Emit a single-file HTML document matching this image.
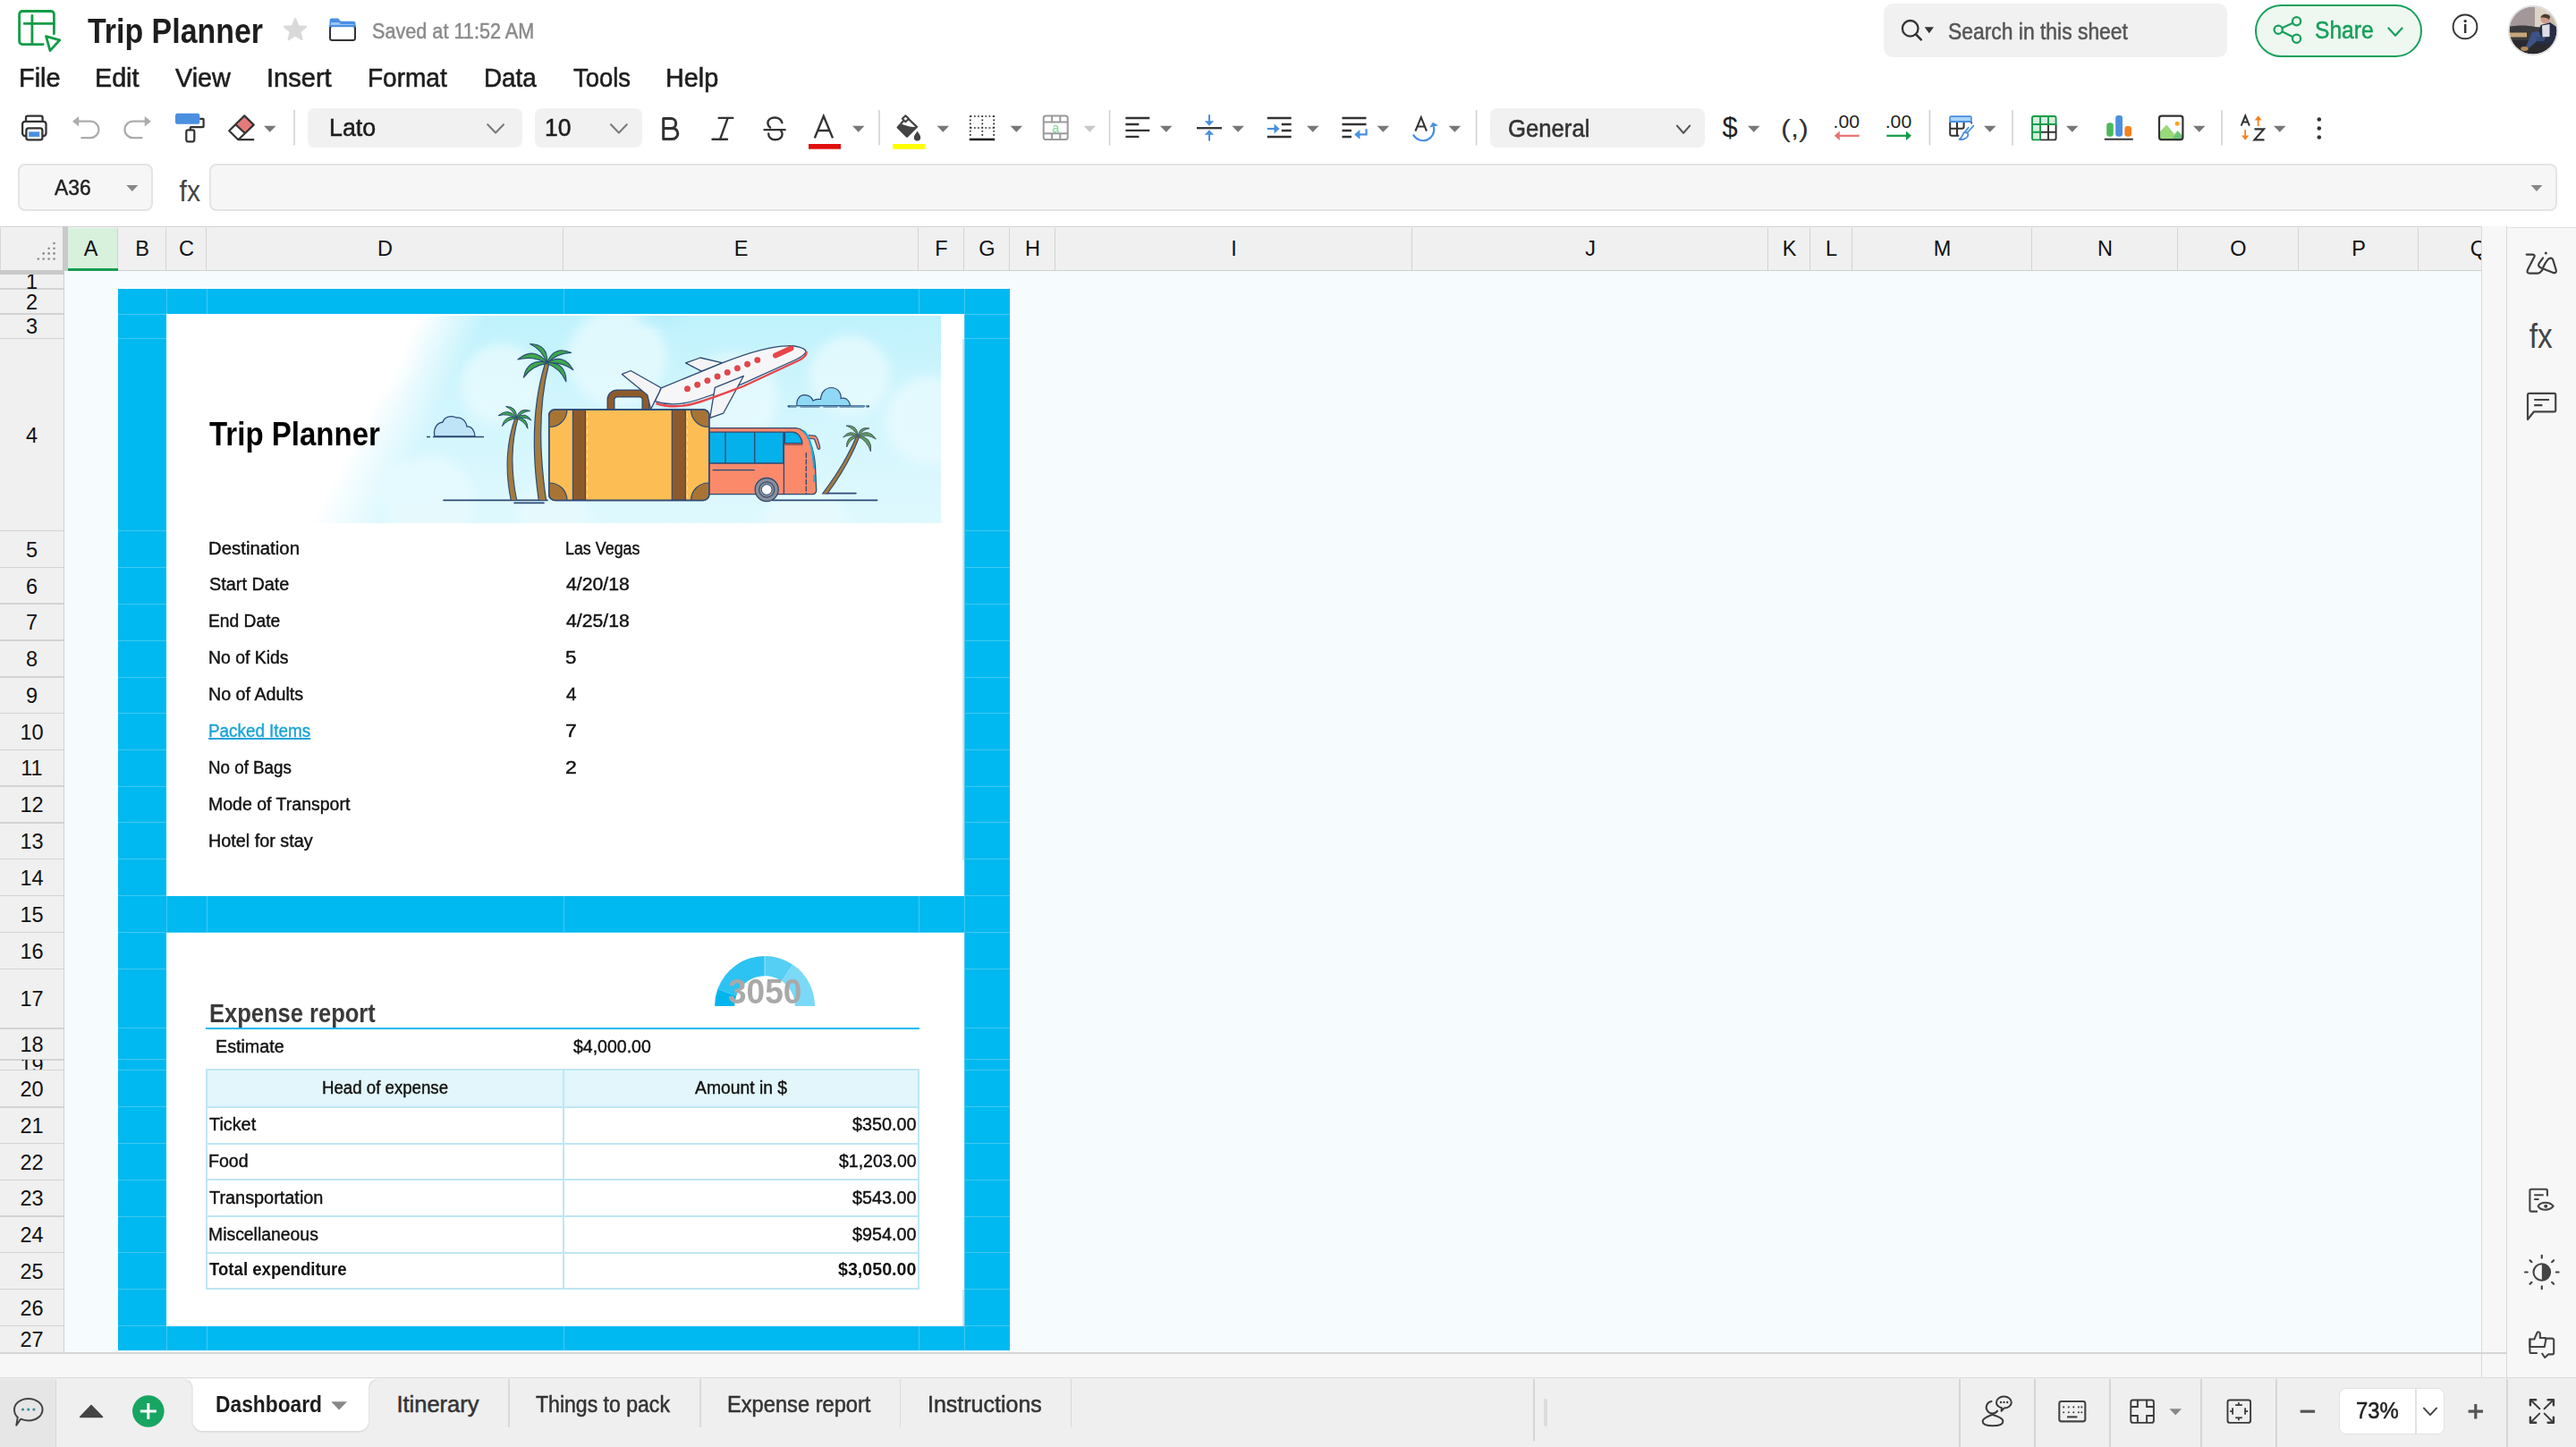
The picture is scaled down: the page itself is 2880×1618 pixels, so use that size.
<!DOCTYPE html>
<html><head><meta charset="utf-8"><title>Trip Planner</title>
<style>
html,body{margin:0;padding:0;}
body{width:2880px;height:1618px;overflow:hidden;position:relative;background:#fff;font-family:"Liberation Sans",sans-serif;}
.t{position:absolute;white-space:nowrap;transform-origin:0 0;z-index:10;}
.ct{position:absolute;z-index:10;text-align:center;font-size:23.5px;line-height:26px;color:#111;}
.rn{position:absolute;left:0;width:71px;text-align:center;font-size:23.5px;line-height:26px;color:#111;}
svg{position:absolute;left:0;top:0;overflow:visible}
</style></head><body>
<div style="position:absolute;left:2106px;top:4px;width:384px;height:60px;border-radius:10px;background:#f1f1f1"></div>
<div style="position:absolute;left:2521px;top:4.5px;width:187px;height:59px;box-sizing:border-box;border:2.3px solid #17a05b;border-radius:30px;background:#eef8f1"></div>
<div style="position:absolute;left:344px;top:121px;width:240px;height:43.5px;border-radius:8px;background:#f1f1f1"></div>
<div style="position:absolute;left:598px;top:121px;width:120px;height:43.5px;border-radius:8px;background:#f1f1f1"></div>
<div style="position:absolute;left:1666.3px;top:121px;width:239.4px;height:44px;border-radius:8px;background:#f1f1f1"></div>
<div style="position:absolute;left:20.4px;top:183px;width:151px;height:53.3px;box-sizing:border-box;border:2px solid #e4e4e4;border-radius:8px;background:#f6f6f6"></div>
<div style="position:absolute;left:234.2px;top:183px;width:2625px;height:53.3px;box-sizing:border-box;border:2px solid #e4e4e4;border-radius:8px;background:#f6f6f6"></div>
<div style="position:absolute;left:72px;top:303px;width:2702px;height:1209px;background:#f6fbfe"></div>
<div style="position:absolute;left:0;top:253px;width:2774px;height:50px;background:#f0f0f0;border-top:1.5px solid #d3d3d3;box-sizing:border-box;overflow:hidden"></div>
<div style="position:absolute;left:0;top:254.5px;width:2774px;height:48.5px;overflow:hidden"><div style="position:absolute;left:76px;top:0;width:56px;height:48.5px;background:#d8f1dc;border-right:1.5px solid #d3d3d3;box-sizing:border-box"></div><div style="position:absolute;left:132px;top:0;width:54px;height:48.5px;background:#f0f0f0;border-right:1.5px solid #d3d3d3;box-sizing:border-box"></div><div style="position:absolute;left:186px;top:0;width:45px;height:48.5px;background:#f0f0f0;border-right:1.5px solid #d3d3d3;box-sizing:border-box"></div><div style="position:absolute;left:231px;top:0;width:399px;height:48.5px;background:#f0f0f0;border-right:1.5px solid #d3d3d3;box-sizing:border-box"></div><div style="position:absolute;left:630px;top:0;width:397px;height:48.5px;background:#f0f0f0;border-right:1.5px solid #d3d3d3;box-sizing:border-box"></div><div style="position:absolute;left:1027px;top:0;width:51px;height:48.5px;background:#f0f0f0;border-right:1.5px solid #d3d3d3;box-sizing:border-box"></div><div style="position:absolute;left:1078px;top:0;width:51px;height:48.5px;background:#f0f0f0;border-right:1.5px solid #d3d3d3;box-sizing:border-box"></div><div style="position:absolute;left:1129px;top:0;width:51px;height:48.5px;background:#f0f0f0;border-right:1.5px solid #d3d3d3;box-sizing:border-box"></div><div style="position:absolute;left:1180px;top:0;width:399px;height:48.5px;background:#f0f0f0;border-right:1.5px solid #d3d3d3;box-sizing:border-box"></div><div style="position:absolute;left:1579px;top:0;width:398px;height:48.5px;background:#f0f0f0;border-right:1.5px solid #d3d3d3;box-sizing:border-box"></div><div style="position:absolute;left:1977px;top:0;width:47px;height:48.5px;background:#f0f0f0;border-right:1.5px solid #d3d3d3;box-sizing:border-box"></div><div style="position:absolute;left:2024px;top:0;width:47px;height:48.5px;background:#f0f0f0;border-right:1.5px solid #d3d3d3;box-sizing:border-box"></div><div style="position:absolute;left:2071px;top:0;width:201px;height:48.5px;background:#f0f0f0;border-right:1.5px solid #d3d3d3;box-sizing:border-box"></div><div style="position:absolute;left:2272px;top:0;width:163px;height:48.5px;background:#f0f0f0;border-right:1.5px solid #d3d3d3;box-sizing:border-box"></div><div style="position:absolute;left:2435px;top:0;width:135px;height:48.5px;background:#f0f0f0;border-right:1.5px solid #d3d3d3;box-sizing:border-box"></div><div style="position:absolute;left:2570px;top:0;width:134px;height:48.5px;background:#f0f0f0;border-right:1.5px solid #d3d3d3;box-sizing:border-box"></div><div style="position:absolute;left:2704px;top:0;width:134px;height:48.5px;background:#f0f0f0;border-right:1.5px solid #d3d3d3;box-sizing:border-box"></div></div>
<div style="position:absolute;left:0;top:301.5px;width:2774px;height:1.5px;background:#d0d0d0"></div>
<div style="position:absolute;left:76px;top:300px;width:56px;height:3px;background:#1a9c50"></div>
<div style="position:absolute;left:0;top:254.5px;width:70px;height:48px;background:#f0f0f0;border-left:1.5px solid #d8d8d8;box-sizing:border-box"></div>
<div style="position:absolute;left:70px;top:253px;width:6px;height:50px;background:#c9c9c9"></div>
<div style="position:absolute;left:0;top:302px;width:72px;height:4.5px;background:#c9c9c9"></div>
<div style="position:absolute;left:0;top:306.5px;width:72px;height:1205.5px;background:#f0f0f0;border-right:1.5px solid #d0d0d0;box-sizing:border-box"></div>
<div style="position:absolute;left:0;top:322.25px;width:71px;height:1.5px;background:#d3d3d3"></div>
<div style="position:absolute;left:0;top:350.25px;width:71px;height:1.5px;background:#d3d3d3"></div>
<div style="position:absolute;left:0;top:377.75px;width:71px;height:1.5px;background:#d3d3d3"></div>
<div style="position:absolute;left:0;top:592.95px;width:71px;height:1.5px;background:#d3d3d3"></div>
<div style="position:absolute;left:0;top:633.75px;width:71px;height:1.5px;background:#d3d3d3"></div>
<div style="position:absolute;left:0;top:674.45px;width:71px;height:1.5px;background:#d3d3d3"></div>
<div style="position:absolute;left:0;top:715.45px;width:71px;height:1.5px;background:#d3d3d3"></div>
<div style="position:absolute;left:0;top:756.25px;width:71px;height:1.5px;background:#d3d3d3"></div>
<div style="position:absolute;left:0;top:796.95px;width:71px;height:1.5px;background:#d3d3d3"></div>
<div style="position:absolute;left:0;top:837.65px;width:71px;height:1.5px;background:#d3d3d3"></div>
<div style="position:absolute;left:0;top:878.35px;width:71px;height:1.5px;background:#d3d3d3"></div>
<div style="position:absolute;left:0;top:919.05px;width:71px;height:1.5px;background:#d3d3d3"></div>
<div style="position:absolute;left:0;top:959.85px;width:71px;height:1.5px;background:#d3d3d3"></div>
<div style="position:absolute;left:0;top:1000.85px;width:71px;height:1.5px;background:#d3d3d3"></div>
<div style="position:absolute;left:0;top:1041.85px;width:71px;height:1.5px;background:#d3d3d3"></div>
<div style="position:absolute;left:0;top:1082.75px;width:71px;height:1.5px;background:#d3d3d3"></div>
<div style="position:absolute;left:0;top:1149.05px;width:71px;height:1.5px;background:#d3d3d3"></div>
<div style="position:absolute;left:0;top:1184.05px;width:71px;height:1.5px;background:#d3d3d3"></div>
<div style="position:absolute;left:0;top:1195.75px;width:71px;height:1.5px;background:#d3d3d3"></div>
<div style="position:absolute;left:0;top:1237.05px;width:71px;height:1.5px;background:#d3d3d3"></div>
<div style="position:absolute;left:0;top:1277.85px;width:71px;height:1.5px;background:#d3d3d3"></div>
<div style="position:absolute;left:0;top:1318.55px;width:71px;height:1.5px;background:#d3d3d3"></div>
<div style="position:absolute;left:0;top:1359.25px;width:71px;height:1.5px;background:#d3d3d3"></div>
<div style="position:absolute;left:0;top:1399.95px;width:71px;height:1.5px;background:#d3d3d3"></div>
<div style="position:absolute;left:0;top:1440.75px;width:71px;height:1.5px;background:#d3d3d3"></div>
<div style="position:absolute;left:0;top:1481.85px;width:71px;height:1.5px;background:#d3d3d3"></div>
<div style="position:absolute;left:132px;top:323px;width:997px;height:1187px;background:#00b9f0"></div>
<div style="position:absolute;left:185.5px;top:323px;width:1px;height:1187px;background:#3fc8f3"></div>
<div style="position:absolute;left:230.5px;top:323px;width:1px;height:1187px;background:#3fc8f3"></div>
<div style="position:absolute;left:629.5px;top:323px;width:1px;height:1187px;background:#3fc8f3"></div>
<div style="position:absolute;left:1026.5px;top:323px;width:1px;height:1187px;background:#3fc8f3"></div>
<div style="position:absolute;left:1077.5px;top:323px;width:1px;height:1187px;background:#3fc8f3"></div>
<div style="position:absolute;left:132px;top:350.5px;width:997px;height:1px;background:#3fc8f3"></div>
<div style="position:absolute;left:132px;top:378.0px;width:997px;height:1px;background:#3fc8f3"></div>
<div style="position:absolute;left:132px;top:593.2px;width:997px;height:1px;background:#3fc8f3"></div>
<div style="position:absolute;left:132px;top:634.0px;width:997px;height:1px;background:#3fc8f3"></div>
<div style="position:absolute;left:132px;top:674.7px;width:997px;height:1px;background:#3fc8f3"></div>
<div style="position:absolute;left:132px;top:715.7px;width:997px;height:1px;background:#3fc8f3"></div>
<div style="position:absolute;left:132px;top:756.5px;width:997px;height:1px;background:#3fc8f3"></div>
<div style="position:absolute;left:132px;top:797.2px;width:997px;height:1px;background:#3fc8f3"></div>
<div style="position:absolute;left:132px;top:837.9px;width:997px;height:1px;background:#3fc8f3"></div>
<div style="position:absolute;left:132px;top:878.6px;width:997px;height:1px;background:#3fc8f3"></div>
<div style="position:absolute;left:132px;top:919.3px;width:997px;height:1px;background:#3fc8f3"></div>
<div style="position:absolute;left:132px;top:960.1px;width:997px;height:1px;background:#3fc8f3"></div>
<div style="position:absolute;left:132px;top:1001.1px;width:997px;height:1px;background:#3fc8f3"></div>
<div style="position:absolute;left:132px;top:1042.1px;width:997px;height:1px;background:#3fc8f3"></div>
<div style="position:absolute;left:132px;top:1083.0px;width:997px;height:1px;background:#3fc8f3"></div>
<div style="position:absolute;left:132px;top:1149.3px;width:997px;height:1px;background:#3fc8f3"></div>
<div style="position:absolute;left:132px;top:1184.3px;width:997px;height:1px;background:#3fc8f3"></div>
<div style="position:absolute;left:132px;top:1196.0px;width:997px;height:1px;background:#3fc8f3"></div>
<div style="position:absolute;left:132px;top:1237.3px;width:997px;height:1px;background:#3fc8f3"></div>
<div style="position:absolute;left:132px;top:1278.1px;width:997px;height:1px;background:#3fc8f3"></div>
<div style="position:absolute;left:132px;top:1318.8px;width:997px;height:1px;background:#3fc8f3"></div>
<div style="position:absolute;left:132px;top:1359.5px;width:997px;height:1px;background:#3fc8f3"></div>
<div style="position:absolute;left:132px;top:1400.2px;width:997px;height:1px;background:#3fc8f3"></div>
<div style="position:absolute;left:132px;top:1441.0px;width:997px;height:1px;background:#3fc8f3"></div>
<div style="position:absolute;left:132px;top:1482.1px;width:997px;height:1px;background:#3fc8f3"></div>
<div style="position:absolute;left:186px;top:351px;width:892px;height:650.6px;background:#fff"></div>
<div style="position:absolute;left:186px;top:1042.6px;width:892px;height:440px;background:#fff"></div>
<div style="position:absolute;left:1076.2px;top:379px;width:1.5px;height:583px;background:#d9dfe2"></div>
<div style="position:absolute;left:1076.2px;top:1441.5px;width:1.5px;height:41px;background:#d9dfe2"></div>
<div style="position:absolute;left:230px;top:1148.7px;width:797.6px;height:2.2px;background:#10b6ee"></div>
<div style="position:absolute;left:230.5px;top:1196px;width:796.5px;height:41.5px;background:#e2f6fc"></div>
<div style="position:absolute;left:230px;top:1195px;width:798px;height:2px;background:#bfe6f5"></div>
<div style="position:absolute;left:230px;top:1236.6px;width:798px;height:2px;background:#bfe6f5"></div>
<div style="position:absolute;left:230px;top:1277.5px;width:798px;height:2px;background:#bfe6f5"></div>
<div style="position:absolute;left:230px;top:1318.3px;width:798px;height:2px;background:#bfe6f5"></div>
<div style="position:absolute;left:230px;top:1359px;width:798px;height:2px;background:#bfe6f5"></div>
<div style="position:absolute;left:230px;top:1399.8px;width:798px;height:2px;background:#bfe6f5"></div>
<div style="position:absolute;left:230px;top:1440.4px;width:798px;height:2px;background:#bfe6f5"></div>
<div style="position:absolute;left:230px;top:1195px;width:2px;height:247.4px;background:#bfe6f5"></div>
<div style="position:absolute;left:628.8px;top:1195px;width:2px;height:247.4px;background:#bfe6f5"></div>
<div style="position:absolute;left:1025.9px;top:1195px;width:2px;height:247.4px;background:#bfe6f5"></div>
<div style="position:absolute;left:2774px;top:253px;width:29px;height:1287px;background:#f7f7f7;border-left:1.5px solid #d9d9d9;border-right:1.5px solid #d9d9d9;box-sizing:border-box"></div>
<div style="position:absolute;left:2803px;top:253.5px;width:77px;height:1287px;background:#f7f7f7;border-top:1.5px solid #e2e2e2;box-sizing:border-box"></div>
<div style="position:absolute;left:0;top:1512px;width:2774px;height:28.5px;background:#f7f7f7;border-top:2px solid #d6d6d6;box-sizing:border-box"></div>
<div style="position:absolute;left:2774px;top:1512px;width:29px;height:2px;background:#d6d6d6"></div>
<div style="position:absolute;left:0;top:1540px;width:2880px;height:78px;background:#efefef;border-top:1.5px solid #dcdcdc;box-sizing:border-box"></div>
<div style="position:absolute;left:0;top:1541.5px;width:63px;height:76.5px;background:#e6e6e6;border-right:1.5px solid #d8d8d8;box-sizing:border-box"></div>
<div style="position:absolute;left:568.05px;top:1542px;width:1.5px;height:54px;background:#dadada"></div>
<div style="position:absolute;left:782.25px;top:1542px;width:1.5px;height:54px;background:#dadada"></div>
<div style="position:absolute;left:1005.95px;top:1542px;width:1.5px;height:54px;background:#dadada"></div>
<div style="position:absolute;left:1196.95px;top:1542px;width:1.5px;height:54px;background:#dadada"></div>
<div style="position:absolute;left:1714.3px;top:1542px;width:1.5px;height:69px;background:#d6d6d6"></div>
<div style="position:absolute;left:1726px;top:1564px;width:4px;height:31px;background:#dcdcdc;border-radius:2px"></div>
<div style="position:absolute;left:2190.25px;top:1541.5px;width:1.5px;height:76.5px;background:#d6d6d6"></div>
<div style="position:absolute;left:2274.25px;top:1541.5px;width:1.5px;height:76.5px;background:#d6d6d6"></div>
<div style="position:absolute;left:2358.25px;top:1541.5px;width:1.5px;height:76.5px;background:#d6d6d6"></div>
<div style="position:absolute;left:2460.25px;top:1541.5px;width:1.5px;height:76.5px;background:#d6d6d6"></div>
<div style="position:absolute;left:2544.25px;top:1541.5px;width:1.5px;height:76.5px;background:#d6d6d6"></div>
<div style="position:absolute;left:2802.25px;top:1541.5px;width:1.5px;height:76.5px;background:#d6d6d6"></div>
<div style="position:absolute;left:2615px;top:1552px;width:118px;height:52px;box-sizing:border-box;border:1.5px solid #e2e2e2;border-radius:8px;background:#fff"></div>
<div style="position:absolute;left:2700.3px;top:1553px;width:1.5px;height:50px;background:#e2e2e2"></div>
<div style="position:absolute;left:0;top:0;width:2774px;height:303px;overflow:hidden"><div class="ct" style="left:71px;width:61px;top:265px">A</div><div class="ct" style="left:132px;width:54px;top:265px">B</div><div class="ct" style="left:186px;width:45px;top:265px">C</div><div class="ct" style="left:231px;width:399px;top:265px">D</div><div class="ct" style="left:630px;width:397px;top:265px">E</div><div class="ct" style="left:1027px;width:51px;top:265px">F</div><div class="ct" style="left:1078px;width:51px;top:265px">G</div><div class="ct" style="left:1129px;width:51px;top:265px">H</div><div class="ct" style="left:1180px;width:399px;top:265px">I</div><div class="ct" style="left:1579px;width:398px;top:265px">J</div><div class="ct" style="left:1977px;width:47px;top:265px">K</div><div class="ct" style="left:2024px;width:47px;top:265px">L</div><div class="ct" style="left:2071px;width:201px;top:265px">M</div><div class="ct" style="left:2272px;width:163px;top:265px">N</div><div class="ct" style="left:2435px;width:135px;top:265px">O</div><div class="ct" style="left:2570px;width:134px;top:265px">P</div><div class="ct" style="left:2704px;width:134px;top:265px">Q</div></div>
<div style="position:absolute;left:0;top:306.5px;width:71px;height:16.5px;overflow:hidden"><div class="rn" style="top:-4.05px">1</div></div><div style="position:absolute;left:0;top:323px;width:71px;height:28px;overflow:hidden"><div class="rn" style="top:1.70px">2</div></div><div style="position:absolute;left:0;top:351px;width:71px;height:27.5px;overflow:hidden"><div class="rn" style="top:1.45px">3</div></div><div style="position:absolute;left:0;top:378.5px;width:71px;height:215.20000000000005px;overflow:hidden"><div class="rn" style="top:95.30px">4</div></div><div style="position:absolute;left:0;top:593.7px;width:71px;height:40.799999999999955px;overflow:hidden"><div class="rn" style="top:8.10px">5</div></div><div style="position:absolute;left:0;top:634.5px;width:71px;height:40.700000000000045px;overflow:hidden"><div class="rn" style="top:8.05px">6</div></div><div style="position:absolute;left:0;top:675.2px;width:71px;height:41.0px;overflow:hidden"><div class="rn" style="top:8.20px">7</div></div><div style="position:absolute;left:0;top:716.2px;width:71px;height:40.799999999999955px;overflow:hidden"><div class="rn" style="top:8.10px">8</div></div><div style="position:absolute;left:0;top:757px;width:71px;height:40.700000000000045px;overflow:hidden"><div class="rn" style="top:8.05px">9</div></div><div style="position:absolute;left:0;top:797.7px;width:71px;height:40.69999999999993px;overflow:hidden"><div class="rn" style="top:8.05px">10</div></div><div style="position:absolute;left:0;top:838.4px;width:71px;height:40.700000000000045px;overflow:hidden"><div class="rn" style="top:8.05px">11</div></div><div style="position:absolute;left:0;top:879.1px;width:71px;height:40.69999999999993px;overflow:hidden"><div class="rn" style="top:8.05px">12</div></div><div style="position:absolute;left:0;top:919.8px;width:71px;height:40.80000000000007px;overflow:hidden"><div class="rn" style="top:8.10px">13</div></div><div style="position:absolute;left:0;top:960.6px;width:71px;height:41.0px;overflow:hidden"><div class="rn" style="top:8.20px">14</div></div><div style="position:absolute;left:0;top:1001.6px;width:71px;height:40.999999999999886px;overflow:hidden"><div class="rn" style="top:8.20px">15</div></div><div style="position:absolute;left:0;top:1042.6px;width:71px;height:40.90000000000009px;overflow:hidden"><div class="rn" style="top:8.15px">16</div></div><div style="position:absolute;left:0;top:1083.5px;width:71px;height:66.29999999999995px;overflow:hidden"><div class="rn" style="top:20.85px">17</div></div><div style="position:absolute;left:0;top:1149.8px;width:71px;height:35.0px;overflow:hidden"><div class="rn" style="top:5.20px">18</div></div><div style="position:absolute;left:0;top:1184.8px;width:71px;height:11.700000000000045px;overflow:hidden"><div class="rn" style="top:-6.45px">19</div></div><div style="position:absolute;left:0;top:1196.5px;width:71px;height:41.299999999999955px;overflow:hidden"><div class="rn" style="top:8.35px">20</div></div><div style="position:absolute;left:0;top:1237.8px;width:71px;height:40.799999999999955px;overflow:hidden"><div class="rn" style="top:8.10px">21</div></div><div style="position:absolute;left:0;top:1278.6px;width:71px;height:40.700000000000045px;overflow:hidden"><div class="rn" style="top:8.05px">22</div></div><div style="position:absolute;left:0;top:1319.3px;width:71px;height:40.700000000000045px;overflow:hidden"><div class="rn" style="top:8.05px">23</div></div><div style="position:absolute;left:0;top:1360px;width:71px;height:40.700000000000045px;overflow:hidden"><div class="rn" style="top:8.05px">24</div></div><div style="position:absolute;left:0;top:1400.7px;width:71px;height:40.799999999999955px;overflow:hidden"><div class="rn" style="top:8.10px">25</div></div><div style="position:absolute;left:0;top:1441.5px;width:71px;height:41.09999999999991px;overflow:hidden"><div class="rn" style="top:8.25px">26</div></div><div style="position:absolute;left:0;top:1482.6px;width:71px;height:29.40000000000009px;overflow:hidden"><div class="rn" style="top:2.40px">27</div></div>
<svg width="2880" height="1618" viewBox="0 0 2880 1618" style="z-index:3"><defs><linearGradient id="bgG" x1="0" y1="1" x2="1" y2="0.2"><stop offset="0" stop-color="#ffffff"/><stop offset="0.22" stop-color="#ffffff"/><stop offset="0.42" stop-color="#e6f9fd"/><stop offset="0.6" stop-color="#d7f5fc"/><stop offset="1" stop-color="#d3f3fb"/></linearGradient><radialGradient id="fadeW" cx="0.05" cy="0.5" r="0.45"><stop offset="0" stop-color="#fff" stop-opacity="1"/><stop offset="0.6" stop-color="#fff" stop-opacity="1"/><stop offset="1" stop-color="#fff" stop-opacity="0"/></radialGradient><clipPath id="imgc"><rect x="186" y="353" width="866" height="232"/></clipPath></defs><g clip-path="url(#imgc)"><defs><linearGradient id="cy" x1="0" y1="0" x2="0" y2="1"><stop offset="0" stop-color="#bff2fc"/><stop offset="0.4" stop-color="#d0f5fd"/><stop offset="1" stop-color="#dff9fe"/></linearGradient><linearGradient id="wf" gradientUnits="userSpaceOnUse" x1="418" y1="450" x2="478" y2="482"><stop offset="0" stop-color="#fff" stop-opacity="1"/><stop offset="1" stop-color="#fff" stop-opacity="0"/></linearGradient><filter id="bl" x="-20%" y="-20%" width="140%" height="140%"><feGaussianBlur stdDeviation="6"/></filter></defs><rect x="186" y="353" width="866" height="232" fill="url(#cy)"/><g fill="#e9fbfe" opacity="0.75" filter="url(#bl)"><circle cx="480" cy="560" r="50"/><circle cx="560" cy="430" r="45"/><circle cx="690" cy="400" r="55"/><circle cx="820" cy="445" r="50"/><circle cx="950" cy="420" r="45"/><circle cx="1040" cy="470" r="50"/><circle cx="620" cy="580" r="40"/><circle cx="900" cy="585" r="45"/></g><g fill="#b8eefb" opacity="0.7" filter="url(#bl)"><ellipse cx="740" cy="355" rx="28" ry="10"/></g><rect x="186" y="353" width="866" height="232" fill="url(#wf)"/><defs><filter id="bl2" x="-50%" y="-50%" width="200%" height="200%"><feGaussianBlur stdDeviation="14"/></filter></defs><ellipse cx="330" cy="400" rx="120" ry="60" fill="#fff" filter="url(#bl2)"/><g stroke="#2c4a74" stroke-width="1.6" fill="none" stroke-linecap="round"><path d="M496 559.4 H612 M864 559.4 H980.6 M575 562.4 H608 M924 551.6 H957"/></g><path d="M486 488 C484 480 488 473 495 472 C497 466 504 464 510 467 C515 466 521 470 522 477 C527 476 531 482 531 488 Z" fill="#bfe4f7" stroke="#2c4a74" stroke-width="1.3"/><path d="M477 488.5 H481 M484 488.5 H541" stroke="#2c4a74" stroke-width="1.4"/><path d="M891 453.7 C890 447 894 441.5 899.5 441.7 C905 441.8 908 445.5 909 448 C911 446.5 914 446 917.5 446.5 C918 438.5 923 433.5 929.5 433.5 C936 433.5 940.5 438.5 940.2 445.5 C944 444 949.5 446.5 950.5 453.7 Z" fill="#8fd9f6" stroke="#2c4a74" stroke-width="1.2"/><path d="M881.5 454.3 H890 M895 454.3 H916 M921 454.3 H936 M939 454.3 H966 M969 454.3 H971" stroke="#2c4a74" stroke-width="2.2" stroke-linecap="round"/><path d="M883 454.3 H970" stroke="#7cc3e6" stroke-width="0.8"/><path d="M609.6 406 Q589.5 470 602.3 559.5 L610.6 559.5 Q597.5 470 613.6 407 Z" fill="#a47b3f" stroke="#2c4a74" stroke-width="1.2"/><path d="M611.6 405.4 Q613.0 385.1 592.6 384.5 Q606.3 391.1 611.6 406.4 Z" fill="#3ea84d" stroke="#2c4a74" stroke-width="1.1" stroke-linejoin="round"/><path d="M611.6 405.4 Q597.0 386.7 578.9 402.0 Q595.9 397.2 611.6 406.4 Z" fill="#3ea84d" stroke="#2c4a74" stroke-width="1.1" stroke-linejoin="round"/><path d="M611.6 405.4 Q589.8 400.1 585.4 422.1 Q595.2 408.5 611.6 406.4 Z" fill="#3ea84d" stroke="#2c4a74" stroke-width="1.1" stroke-linejoin="round"/><path d="M611.6 405.4 Q619.4 385.9 638.6 394.4 Q622.9 394.5 611.6 406.4 Z" fill="#3ea84d" stroke="#2c4a74" stroke-width="1.1" stroke-linejoin="round"/><path d="M611.6 405.4 Q630.6 394.4 640.9 413.8 Q627.9 403.7 611.6 406.4 Z" fill="#3ea84d" stroke="#2c4a74" stroke-width="1.1" stroke-linejoin="round"/><path d="M611.6 405.4 Q633.3 405.0 632.9 426.7 Q626.5 411.8 611.6 406.4 Z" fill="#3ea84d" stroke="#2c4a74" stroke-width="1.1" stroke-linejoin="round"/><path d="M576 467 Q561 510 571.3 559.5 L577.8 559.5 Q567.5 510 579 468 Z" fill="#a47b3f" stroke="#2c4a74" stroke-width="1.1"/><path d="M577.4 467.0 Q578.0 454.6 565.6 454.5 Q574.0 458.4 577.4 468.0 Z" fill="#3ea84d" stroke="#2c4a74" stroke-width="1.0" stroke-linejoin="round"/><path d="M577.4 467.0 Q568.5 455.3 557.2 464.7 Q567.8 461.8 577.4 468.0 Z" fill="#3ea84d" stroke="#2c4a74" stroke-width="1.0" stroke-linejoin="round"/><path d="M577.4 467.0 Q564.5 463.4 561.4 476.5 Q567.5 468.6 577.4 468.0 Z" fill="#3ea84d" stroke="#2c4a74" stroke-width="1.0" stroke-linejoin="round"/><path d="M577.4 467.0 Q581.0 455.3 592.6 459.4 Q583.5 460.2 577.4 468.0 Z" fill="#3ea84d" stroke="#2c4a74" stroke-width="1.0" stroke-linejoin="round"/><path d="M577.4 467.0 Q587.3 459.8 594.1 470.0 Q586.4 465.2 577.4 468.0 Z" fill="#3ea84d" stroke="#2c4a74" stroke-width="1.0" stroke-linejoin="round"/><path d="M577.4 467.0 Q590.0 466.5 590.0 479.2 Q586.1 470.6 577.4 468.0 Z" fill="#3ea84d" stroke="#2c4a74" stroke-width="1.0" stroke-linejoin="round"/><path d="M957.5 488 Q944 520 919.5 552 L925 552 Q948 521 960.5 489 Z" fill="#a47b3f" stroke="#2c4a74" stroke-width="1.1"/><path d="M959.2 487.0 Q958.3 474.6 946.0 476.0 Q954.8 478.9 959.2 488.0 Z" fill="#5e9f58" stroke="#4a5a6a" stroke-width="1.0" stroke-linejoin="round"/><path d="M959.2 487.0 Q949.9 479.4 942.7 489.0 Q950.6 484.7 959.2 488.0 Z" fill="#5e9f58" stroke="#4a5a6a" stroke-width="1.0" stroke-linejoin="round"/><path d="M959.2 487.0 Q946.1 486.9 946.5 500.0 Q950.2 491.0 959.2 488.0 Z" fill="#5e9f58" stroke="#4a5a6a" stroke-width="1.0" stroke-linejoin="round"/><path d="M959.2 487.0 Q961.4 476.3 972.0 479.0 Q964.0 480.4 959.2 488.0 Z" fill="#5e9f58" stroke="#4a5a6a" stroke-width="1.0" stroke-linejoin="round"/><path d="M959.2 487.0 Q971.4 478.5 979.4 491.0 Q970.1 485.0 959.2 488.0 Z" fill="#5e9f58" stroke="#4a5a6a" stroke-width="1.0" stroke-linejoin="round"/><path d="M959.2 487.0 Q975.7 488.6 973.5 505.0 Q970.0 493.1 959.2 488.0 Z" fill="#5e9f58" stroke="#4a5a6a" stroke-width="1.0" stroke-linejoin="round"/><path d="M683 458 V447 a7 7 0 0 1 7 -7 H715 a7 7 0 0 1 7 7 V458" fill="none" stroke="#2c4a74" stroke-width="9"/><path d="M683 458 V447 a7 7 0 0 1 7 -7 H715 a7 7 0 0 1 7 7 V458" fill="none" stroke="#8f5a2b" stroke-width="6.4"/><g stroke="#2c4a74" stroke-width="1.3" stroke-linejoin="round"><path d="M766.6 405.9 L783 400 L808.1 405.9 L784.3 415.2 Z" fill="#f4f4f6"/><path d="M695.4 418.4 L705.2 414.5 L739.2 433.8 L737 439 L727.5 457.6 L723.8 441.7 Z" fill="#f4f4f6"/><path d="M739.2 433.8 L808.6 405.4 C840 393 862 387 880.3 386.8 C890 386.5 899 388.5 901 392.5 C901 395 898 398 890 402 L829 429.6 C810 437 796.5 441.7 780 447 C765 452 748 454 732.2 448.7 L737 439 Z" fill="#f6f6f8"/><path d="M799.3 433.4 L831.4 420.3 L808.6 462.2 L793.7 467.4 Z" fill="#f4f4f6"/></g><path d="M733.5 451 C748 456 765 455 782 449.5 C800 444 815 438 832 431.5 L893 403 C899 400 902 396 901.5 393" fill="none" stroke="#e8454a" stroke-width="2.4"/><path d="M867 397.5 L884.5 389.6" stroke="#e8454a" stroke-width="6" stroke-linecap="round"/><circle cx="768.5" cy="434.8" r="3.2" fill="#e8454a" stroke="#c0353a" stroke-width="0.5"/><circle cx="779.7" cy="430.2" r="3.2" fill="#e8454a" stroke="#c0353a" stroke-width="0.5"/><circle cx="790.9" cy="425.6" r="3.2" fill="#e8454a" stroke="#c0353a" stroke-width="0.5"/><circle cx="802.1" cy="421.0" r="3.2" fill="#e8454a" stroke="#c0353a" stroke-width="0.5"/><circle cx="813.2" cy="416.4" r="3.2" fill="#e8454a" stroke="#c0353a" stroke-width="0.5"/><circle cx="824.4" cy="411.8" r="3.2" fill="#e8454a" stroke="#c0353a" stroke-width="0.5"/><circle cx="835.6" cy="407.2" r="3.2" fill="#e8454a" stroke="#c0353a" stroke-width="0.5"/><circle cx="846.8" cy="402.6" r="3.2" fill="#e8454a" stroke="#c0353a" stroke-width="0.5"/><g stroke="#2c4a74" stroke-width="1.3" stroke-linejoin="round"><path d="M790 478.6 H889.9 C902 478.6 910.5 500 911.6 523.6 L912.7 548 C912.7 551 911 552.7 908 552.7 H790 Z" fill="#fb8a6b"/><path d="M791 483.2 H875.9 V518 H791 Z" fill="#05b1ea"/><path d="M877.4 483.2 H886 C892 483.2 896 489 897.1 495.7 H877.4 Z" fill="#05b1ea"/><path d="M811 483.2 V518 M843.7 483.2 V518 M876.4 483.2 V552.7" fill="none"/><path d="M876.4 497.2 H897.5" fill="none" stroke="#8a4a4a"/><path d="M901.3 506 V552" fill="none" stroke-dasharray="6 1.5"/><path d="M796.6 525.7 H843.7" fill="none"/></g><path d="M904 486.5 L911.6 487.4 C913.5 488 915.5 494 916.8 500.5 C917 502.5 915 503 914.2 501.5 L910.5 491 L903.5 490" fill="#fb8a6b" stroke="#2c4a74" stroke-width="1.1"/><path d="M897.5 481.4 C905.5 486 909 503 910 524" fill="none" stroke="#05b1ea" stroke-width="2"/><path d="M910 531 V539" stroke="#05b1ea" stroke-width="1.6"/><circle cx="857.2" cy="547.5" r="13" fill="#8b9099" stroke="#2c4a74" stroke-width="1.3"/><circle cx="857.2" cy="547.5" r="8.6" fill="none" stroke="#2c4a74" stroke-width="1.1"/><circle cx="857.2" cy="547.5" r="5.8" fill="#fff" stroke="#2c4a74" stroke-width="1"/><rect x="613.8" y="458" width="179" height="101.4" rx="6.5" fill="#fdbd55" stroke="#2c4a74" stroke-width="1.5"/><path d="M614.5 477.5 A19.5 19.5 0 0 0 634 458.5 H620 a6 6 0 0 0 -5.5 6 Z" fill="#a87434"/><path d="M792 477.5 A19.5 19.5 0 0 1 772.5 458.5 H786 a6 6 0 0 1 6 6 Z" fill="#a87434"/><path d="M614.5 540 A19.5 19.5 0 0 1 634 559 H620 a6 6 0 0 1 -5.5 -6 Z" fill="#a87434"/><path d="M792 540 A19.5 19.5 0 0 0 772.5 559 H786 a6 6 0 0 0 6 -6 Z" fill="#a87434"/><path d="M614.5 477.5 A19.5 19.5 0 0 0 634 458.5 M792 477.5 A19.5 19.5 0 0 1 772.5 458.5 M614.5 540 A19.5 19.5 0 0 1 634 559 M792 540 A19.5 19.5 0 0 0 772.5 559" fill="none" stroke="#2c4a74" stroke-width="1.2"/><rect x="640.5" y="458.5" width="14" height="100.6" fill="#8f5a2b" stroke="#2c4a74" stroke-width="1.2"/><rect x="751.3" y="458.5" width="15" height="100.6" fill="#8f5a2b" stroke="#2c4a74" stroke-width="1.2"/><path d="M656.5 462 V556 M768.5 462 V556" stroke="#fde3a8" stroke-width="1" stroke-dasharray="5 4"/><rect x="613.8" y="458" width="179" height="101.4" rx="6.5" fill="none" stroke="#2c4a74" stroke-width="1.5"/></g><path d="M799.00 1125.00 A56 56 0 0 1 802.38 1105.85 L823.24 1113.44 A33.8 33.8 0 0 0 821.20 1125.00 Z" fill="#00b5ee"/><path d="M802.38 1105.85 A56 56 0 0 1 855.00 1069.00 L855.00 1091.20 A33.8 33.8 0 0 0 823.24 1113.44 Z" fill="#2cc3f2"/><path d="M855.00 1069.00 A56 56 0 0 1 886.31 1078.57 L873.90 1096.98 A33.8 33.8 0 0 0 855.00 1091.20 Z" fill="#55cff4"/><path d="M886.31 1078.57 A56 56 0 0 1 911.00 1125.00 L888.80 1125.00 A33.8 33.8 0 0 0 873.90 1096.98 Z" fill="#7ad9f7"/><path d="M855 1069 V1091.2" stroke="#fff" stroke-width="0.8" opacity="0.6"/></svg>
<svg width="2880" height="1618" viewBox="0 0 2880 1618" style="z-index:5"><g fill="none" stroke="#129c48" stroke-width="2.8" stroke-linecap="round" stroke-linejoin="round"><path d="M60.4 37.8 V16 a3.5 3.5 0 0 0 -3.5 -3.5 H25.1 a3.5 3.5 0 0 0 -3.5 3.5 V46.1 a3.5 3.5 0 0 0 3.5 3.5 H48.2"/><path d="M35.9 17.4 V49.6 M27.2 26.4 H60.4"/><path d="M51.5 40.7 L66.8 44.8 L56 56.6 Z"/></g><polygon points="330.10,21.20 333.39,29.27 342.08,29.91 335.43,35.53 337.51,43.99 330.10,39.40 322.69,43.99 324.77,35.53 318.12,29.91 326.81,29.27" fill="#d9d9d9" stroke="#d9d9d9" stroke-width="2.2" stroke-linejoin="round"/><path d="M368.5 28 V23 a2.5 2.5 0 0 1 2.5 -2.5 H378 l3 3.2 H395 a2.5 2.5 0 0 1 2.5 2.5 V30 H368.5 Z" fill="#4a90e2"/><path d="M370 25 H379 l2 2 H395.5 V28.5 H370 Z" fill="#9cc4f2"/><rect x="369" y="29" width="28" height="16" rx="2.5" fill="#fff" stroke="#333" stroke-width="2"/><rect x="368" y="28" width="30" height="2.2" fill="#4a90e2"/><circle cx="2135.7" cy="31.8" r="8.8" fill="none" stroke="#333" stroke-width="2.3"/><path d="M2142 38.3 L2147.8 44.4" stroke="#333" stroke-width="2.6" stroke-linecap="round"/><path d="M2151.7 30.3 h10.3 l-5.15 7 z" fill="#333"/><g fill="none" stroke="#17a05b" stroke-width="2.3"><circle cx="2567.6" cy="23.8" r="4.6"/><circle cx="2547.2" cy="33.2" r="4.6"/><circle cx="2567.6" cy="43.2" r="4.6"/><path d="M2551.4 31.2 L2563.4 25.8 M2551.4 35.2 L2563.4 41.2"/></g><path d="M2670.4 31.5 L2678.0 39.8 L2685.6 31.5" fill="none" stroke="#17a05b" stroke-width="2.2" stroke-linecap="round" stroke-linejoin="round"/><circle cx="2756" cy="29.9" r="13.4" fill="none" stroke="#333" stroke-width="1.9"/><circle cx="2756.2" cy="23.6" r="1.7" fill="#333"/><rect x="2755" y="27" width="2.4" height="10" fill="#333"/><defs><clipPath id="av"><circle cx="2832" cy="34" r="26.6"/></clipPath><filter id="avb"><feGaussianBlur stdDeviation="0.6"/></filter></defs><g clip-path="url(#av)"><g filter="url(#avb)"><rect x="2803" y="5" width="60" height="58" fill="#a3979a"/><rect x="2834" y="5" width="30" height="26" fill="#ddd3c6"/><rect x="2850" y="5" width="14" height="26" fill="#c9b9a6"/><path d="M2804 30 C2815 28 2825 28 2834 30 L2864 32 V64 H2803 Z" fill="#3b3b3e"/><rect x="2806" y="36.5" width="19" height="5" fill="#c7a77a"/><path d="M2804 45 H2864 V64 H2803 Z" fill="#2b2b2d"/><path d="M2840.5 28 L2851 25 L2858 30 L2858 50 L2836 49 L2838 36 Z" fill="#262e45"/><path d="M2842 28.5 L2850.5 27 L2850.5 41 L2842.5 41.5 Z" fill="#dedde8"/><path d="M2831 36 L2838.5 35 L2842 44 L2836 46 L2828 53.5 L2824 52 Z" fill="#3c5285"/><path d="M2836 41.5 L2846 42 L2844 46 L2836 46 Z" fill="#34497a"/><ellipse cx="2822.5" cy="54.5" rx="4.2" ry="2.4" fill="#b58a58"/><circle cx="2845.6" cy="21.5" r="5" fill="#cf9a8a"/><path d="M2840.5 20 C2840.5 15 2849 14 2851 18.5 L2850 22 C2847 19.5 2843 19 2840.5 20 Z" fill="#4a3a30"/></g></g><circle cx="2832" cy="34" r="27.2" fill="none" stroke="#dcdcdc" stroke-width="1.6"/><g fill="none" stroke="#333333" stroke-width="2.3" stroke-linejoin="round"><path d="M29 135.8 V131.6 a2 2 0 0 1 2 -2 H45.6 a2 2 0 0 1 2 2 V135.8"/><rect x="25.1" y="135.8" width="26.4" height="16.2" rx="3"/><rect x="29.4" y="143.3" width="18" height="13" rx="2.4" fill="#fff"/></g><rect x="32.2" y="147.3" width="12" height="5.6" fill="#4a8fe0"/><g fill="none" stroke="#acacac" stroke-width="2.3"><path d="M87 135.7 H101.2 a9.2 9.2 0 0 1 0 18.4 H90.4"/><path d="M162.8 135.7 H148.6 a9.2 9.2 0 0 0 0 18.4 H159.4"/></g><path d="M81 135.7 L88.2 130 V141.4 Z M168.9 135.7 L161.7 130 V141.4 Z" fill="#acacac"/><rect x="196" y="126.8" width="27.3" height="12" rx="2.6" fill="#4a8fe0"/><path d="M223.3 132.8 H226.8 a0.8 0.8 0 0 1 0.8 0.8 V141.3 a0.8 0.8 0 0 1 -0.8 0.8 H213.6 a0.8 0.8 0 0 0 -0.8 0.8 V145.5" fill="none" stroke="#333333" stroke-width="2.2"/><rect x="208.3" y="145.3" width="9" height="13" rx="2" fill="none" stroke="#333333" stroke-width="2.2"/><path d="M264.3 140.1 L273.3 130 L283.5 139.5 L273.3 148.4 Z" fill="#e57a7a"/><path d="M273.3 129.4 L283.7 139.6 L266.4 156.2 L256.2 146.3 Z M264 139.8 L273.6 148.8 M266.4 156.2 H284.2" fill="none" stroke="#333333" stroke-width="2.2" stroke-linejoin="round"/><path d="M295 140.7 h13.5 l-6.75 7.1 z" fill="#777777"/><rect x="328.25" y="123" width="1.5" height="39.5" fill="#cfcfcf"/><path d="M545.2 139.2 L554.1 148.39999999999998 L563.0 139.2" fill="none" stroke="#7a7a7a" stroke-width="2.1" stroke-linecap="round" stroke-linejoin="round"/><path d="M683 139.2 L691.9 148.39999999999998 L700.8 139.2" fill="none" stroke="#7a7a7a" stroke-width="2.1" stroke-linecap="round" stroke-linejoin="round"/><g fill="none" stroke="#333333" stroke-width="3" stroke-linejoin="round"><path d="M741.7 132.6 H750.3 a5.4 5.4 0 0 1 0 10.8 H741.7 Z M741.7 143.4 H751.8 a6 6 0 0 1 0 12 H741.7 Z"/></g><g fill="none" stroke="#333333" stroke-width="2.4" stroke-linecap="round"><path d="M803.7 131.9 H819.3 M796.5 155.8 H813 M813.7 131.9 L805 155.8"/><path d="M854.5 145.1 H877.7"/><path d="M874.4 137.2 C873.2 133.3 869.9 131.5 866.3 131.5 C861.6 131.5 858.4 134.1 858.4 137.6 C858.4 139.8 859.4 141.3 861.1 142.5"/><path d="M859.2 149.4 C859.2 153.5 862.4 156.3 866.6 156.3 C871.3 156.3 874.6 153.6 874.6 150 C874.6 148.7 874.2 147.5 873.3 146.6"/><path d="M910.8 154.4 L920.8 129.9 L931 154.4 M914.4 146 H927.3" stroke-linecap="butt"/></g><rect x="904" y="161" width="36" height="5.7" fill="#e00f0f"/><path d="M953 140.7 h13.5 l-6.75 7.1 z" fill="#777777"/><rect x="982.25" y="123" width="1.5" height="39.5" fill="#cfcfcf"/><path d="M1013.6 131 L1025 141.8 L1014 152.6 L1003.7 142.4 Z" fill="none" stroke="#444" stroke-width="2.3" stroke-linejoin="round"/><path d="M1004.5 142.3 L1008.6 139.6 C1013 141 1017 143.2 1022.6 142.6 L1024.4 141.8 L1014 152 Z" fill="#444" stroke="#444" stroke-width="1.2" stroke-linejoin="round"/><path d="M1012.4 129.3 L1016 132.8 L1012.4 136.3 L1008.8 132.8 Z" fill="#fff" stroke="#444" stroke-width="2.1" stroke-linejoin="round"/><path d="M1025.6 146.6 C1024 149.5 1021.8 151.6 1021.8 153.7 a3.7 3.7 0 0 0 7.4 0 C1029.2 151.6 1027.2 149.5 1025.6 146.6 Z" fill="#444"/><rect x="998" y="161" width="36" height="5.7" fill="#ffff00"/><path d="M1047.6 140.7 h13.5 l-6.75 7.1 z" fill="#777777"/><g fill="none" stroke="#222" stroke-width="1.7" stroke-dasharray="1.7 2.45"><path d="M1084.8 129.3 V154 M1098.3 129.3 V154 M1111.2 129.3 V154 M1084.8 130 H1112 M1084.8 143 H1112"/></g><rect x="1083.8" y="154.6" width="28.4" height="2.6" fill="#222"/><path d="M1129.6 140.7 h13.5 l-6.75 7.1 z" fill="#777777"/><g fill="none" stroke="#9a9a9a" stroke-width="2"><rect x="1166.7" y="129.6" width="27" height="26.4" rx="2.5"/><path d="M1166.7 136.6 H1193.7 M1166.7 149.2 H1193.7 M1176.1 129.6 V136.6 M1185.3 129.6 V136.6 M1176.1 149.2 V156 M1185.3 149.2 V156"/></g><text x="1180.2" y="147.6" font-size="14" text-anchor="middle" fill="#7fd39a" font-family="Liberation Sans">a</text><path d="M1211.6 140.7 h13.5 l-6.75 7.1 z" fill="#c9c9c9"/><rect x="1239.85" y="123" width="1.5" height="39.5" fill="#cfcfcf"/><g stroke="#333333" stroke-width="2.3"><path d="M1258.4 132 H1285.3 M1258.4 139 H1273.4 M1258.4 145.9 H1285.3 M1258.4 152.9 H1273.4"/></g><path d="M1297 140.7 h13.5 l-6.75 7.1 z" fill="#777777"/><path d="M1338 143.2 H1366" stroke="#333333" stroke-width="2.3"/><path d="M1352 128.2 V137 M1352 157.6 V149" stroke="#4a8fe0" stroke-width="2"/><path d="M1346.8 135.3 H1357.2 L1352 140.8 Z M1346.8 150.8 H1357.2 L1352 145.3 Z" fill="#4a8fe0"/><path d="M1377.4 140.7 h13.5 l-6.75 7.1 z" fill="#777777"/><g stroke="#333333" stroke-width="2.3"><path d="M1416.8 132 H1443.7 M1432.8 139 H1443.7 M1432.8 146 H1443.7 M1416.8 153 H1443.7"/></g><path d="M1416.8 144 H1426" stroke="#4a8fe0" stroke-width="2.2"/><path d="M1424.5 138.6 L1430.6 144 L1424.5 149.4 Z" fill="#4a8fe0"/><path d="M1461 140.7 h13.5 l-6.75 7.1 z" fill="#777777"/><g stroke="#333333" stroke-width="2.3"><path d="M1500.5 132 H1527.5 M1500.5 139 H1527.5 M1500.5 146 H1511 M1500.5 153 H1511"/></g><path d="M1527.6 144.3 V150.4 H1519" fill="none" stroke="#4a8fe0" stroke-width="2.2"/><path d="M1520.4 145 L1514.2 150.4 L1520.4 155.8 Z" fill="#4a8fe0"/><path d="M1539.6 140.7 h13.5 l-6.75 7.1 z" fill="#777777"/><path d="M1582.4 146.6 L1588.8 131.2 L1595 146.6 M1584.6 141.5 H1593" fill="none" stroke="#333333" stroke-width="2.1"/><path d="M1580 150.5 C1583 156.5 1590 158.5 1595.6 156.4 C1601 154.3 1604.3 148.5 1603 141.5" fill="none" stroke="#4a8fe0" stroke-width="2.2"/><path d="M1598.4 142.6 L1601.8 136.7 L1608.2 140.2 Z" fill="#4a8fe0"/><path d="M1619.7 140.7 h13.5 l-6.75 7.1 z" fill="#777777"/><rect x="1649.85" y="123" width="1.5" height="39.5" fill="#cfcfcf"/><path d="M1875 140.6 L1882.1 148.7 L1889.2 140.6" fill="none" stroke="#555" stroke-width="2.1" stroke-linecap="round" stroke-linejoin="round"/><text x="1925.5" y="153.3" font-size="31" fill="#222" font-family="Liberation Sans">$</text><path d="M1954 140.7 h13.5 l-6.75 7.1 z" fill="#777777"/><text x="1991" y="153" font-size="27" fill="#333" font-family="Liberation Sans" textLength="31" lengthAdjust="spacingAndGlyphs">(,)</text><text x="2049.5" y="143" font-size="21" fill="#222" font-family="Liberation Sans" textLength="29.5" lengthAdjust="spacingAndGlyphs">.00</text><path d="M2053.5 151.8 H2078.7" stroke="#e57373" stroke-width="2.2"/><path d="M2050.8 151.8 L2056.8 146.6 V157 Z" fill="#e57373"/><text x="2107.7" y="143" font-size="21" fill="#222" font-family="Liberation Sans" textLength="29.5" lengthAdjust="spacingAndGlyphs">.00</text><path d="M2109.3 151.8 H2134" stroke="#129c48" stroke-width="2.2"/><path d="M2137 151.8 L2131 146.6 V157 Z" fill="#129c48"/><rect x="2156.65" y="123" width="1.5" height="39.5" fill="#cfcfcf"/><path d="M2179.2 137 V131.5 a2.2 2.2 0 0 1 2.2 -2.2 H2202.6 a2.2 2.2 0 0 1 2.2 2.2 V137 Z" fill="#4a8fe0"/><rect x="2180.9" y="131" width="22.3" height="4" fill="#a8d4f5"/><path d="M2180.2 137 V149.7 a2 2 0 0 0 2 2 H2190.2 M2188 137 V151.7 M2180.2 143.8 H2193.6 a2 2 0 0 0 2 -2 V137" fill="none" stroke="#333333" stroke-width="2"/><rect x="2203.3" y="136.7" width="1.7" height="1.7" fill="#333333"/><path d="M2206.4 140.6 L2199.8 148 M2200.8 142.6 L2197 147.2 M2195.6 148.4 C2194 151 2193.5 154 2190.6 155.8 C2194.5 156.5 2198.5 155 2199.8 152.6 C2200.8 150.8 2200.2 149 2199 148.2 Z" fill="none" stroke="#4a8fe0" stroke-width="1.8" stroke-linecap="round" stroke-linejoin="round"/><path d="M2218 140.7 h13.5 l-6.75 7.1 z" fill="#777777"/><rect x="2249.25" y="123" width="1.5" height="39.5" fill="#cfcfcf"/><rect x="2272" y="130" width="26.6" height="26.4" fill="#d6efdd"/><rect x="2281" y="139" width="17.6" height="17.4" fill="#fff"/><path d="M2281 139 H2298.6 M2290 139 V156.4 M2281 147.8 H2298.6 M2298.6 139 V154.4 a2 2 0 0 1 -2 2 H2281" fill="none" stroke="#333333" stroke-width="1.9"/><path d="M2281 156.4 H2274 a2 2 0 0 1 -2 -2 V132 a2 2 0 0 1 2 -2 H2296.6 a2 2 0 0 1 2 2 V139 H2272 M2272 147.8 H2281 M2281 130 V156.4 M2290 130 V139" fill="none" stroke="#129c48" stroke-width="1.9"/><path d="M2310 140.7 h13.5 l-6.75 7.1 z" fill="#777777"/><rect x="2355.2" y="137.2" width="7.6" height="15.5" rx="3.2" fill="#4cb85c"/><rect x="2365.2" y="129" width="7.8" height="23.7" rx="3.2" fill="#4a8fe0"/><rect x="2375.4" y="141" width="7.6" height="11.7" rx="3" fill="#f5821f"/><rect x="2352.8" y="154.7" width="32" height="2" fill="#333333"/><path d="M2415 155.5 V147 L2422.3 139.5 L2431 150 L2434.5 146 L2439.8 151.5 V155.5 Z" fill="#98d97a"/><path d="M2428.5 155.5 L2434.5 146.5 L2439.8 152 V155.5 Z" fill="#6cc77a"/><circle cx="2434.2" cy="138.2" r="2.5" fill="#f5a623"/><rect x="2414" y="129.6" width="26.4" height="26.6" rx="2.6" fill="none" stroke="#333333" stroke-width="2.2"/><path d="M2452 140.7 h13.5 l-6.75 7.1 z" fill="#777777"/><rect x="2483.25" y="123" width="1.5" height="39.5" fill="#cfcfcf"/><path d="M2505.7 140.6 L2510.3 129.4 L2514.9 140.6 M2507.3 136.6 H2513.3" fill="none" stroke="#333333" stroke-width="2"/><path d="M2520.5 144.4 H2531 L2520.5 156.4 H2531.5" fill="none" stroke="#333333" stroke-width="2.2"/><path d="M2524.7 141 V133" stroke="#f5821f" stroke-width="1.8"/><path d="M2520.7 134.5 L2524.7 129.2 L2528.7 134.5 Z" fill="#f5821f"/><path d="M2510.2 145 V152.6" stroke="#f5821f" stroke-width="1.8"/><path d="M2506.2 151.5 L2510.2 156.8 L2514.2 151.5 Z" fill="#f5821f"/><path d="M2542 140.7 h13.5 l-6.75 7.1 z" fill="#777777"/><circle cx="2592.8" cy="133.5" r="2.3" fill="#333333"/><circle cx="2592.8" cy="143.5" r="2.3" fill="#333333"/><circle cx="2592.8" cy="153.5" r="2.3" fill="#333333"/><path d="M141.3 207 h13 l-6.5 7 z" fill="#888"/><path d="M2829.5 207 h13 l-6.5 7 z" fill="#888"/><text x="200.6" y="224.8" font-size="34" fill="#444" font-family="Liberation Sans" textLength="23.4" lengthAdjust="spacingAndGlyphs">fx</text><circle cx="60.5" cy="272" r="1.3" fill="#8a8a8a"/><circle cx="54.6" cy="277.7" r="1.3" fill="#8a8a8a"/><circle cx="60.5" cy="277.7" r="1.3" fill="#8a8a8a"/><circle cx="48.7" cy="283.4" r="1.3" fill="#8a8a8a"/><circle cx="54.6" cy="283.4" r="1.3" fill="#8a8a8a"/><circle cx="60.5" cy="283.4" r="1.3" fill="#8a8a8a"/><circle cx="42.8" cy="289.5" r="1.3" fill="#8a8a8a"/><circle cx="48.7" cy="289.5" r="1.3" fill="#8a8a8a"/><circle cx="54.6" cy="289.5" r="1.3" fill="#8a8a8a"/><circle cx="60.5" cy="289.5" r="1.3" fill="#8a8a8a"/><g fill="none" stroke="#3d3d3d" stroke-width="2.2" stroke-linecap="round" stroke-linejoin="round"><path d="M2824.7 284.6 H2831.5 Q2834.8 284.8 2833.2 287.6 L2825.9 301.8 Q2824.6 305.7 2828.3 305.7 H2837.3 Q2839.8 305.5 2842.2 302.2"/><path d="M2843.1 288.3 L2838.7 294.3 Q2837 297.6 2840.3 299.2 L2854.6 304.9 Q2858.3 306 2857.8 302.2 L2854.4 291 Q2853.2 287.3 2849.8 289.2 Q2846.6 291.4 2842.3 301.2"/></g><circle cx="2846.3" cy="283" r="1.5" fill="#3d3d3d"/><text x="2827.8" y="388.8" font-size="39" fill="#444" font-family="Liberation Sans" textLength="26" lengthAdjust="spacingAndGlyphs">fx</text><g fill="none" stroke="#444" stroke-width="2.2" stroke-linejoin="round"><path d="M2827.5 439.8 H2855.6 a1.6 1.6 0 0 1 1.6 1.6 V458.7 a1.6 1.6 0 0 1 -1.6 1.6 H2833 L2826 469 V441.4 a1.6 1.6 0 0 1 1.5 -1.6 Z"/><path d="M2833.2 447 H2850 M2833.2 453.2 H2842.4"/></g><g fill="none" stroke="#444" stroke-width="2.1" stroke-linejoin="round"><path d="M2837 1354.6 H2830 a1.6 1.6 0 0 1 -1.6 -1.6 V1331.3 a1.6 1.6 0 0 1 1.6 -1.6 H2846.3 a1.6 1.6 0 0 1 1.6 1.6 V1337.5"/><path d="M2833.2 1336.2 H2843.7 M2833.2 1341 H2838.6"/><path d="M2837.6 1348.7 C2840.5 1343.4 2850.8 1343.4 2854.6 1348.7 C2850.8 1354 2840.5 1354 2837.6 1348.7 Z"/></g><circle cx="2846.2" cy="1348.7" r="2" fill="#444"/><circle cx="2841.8" cy="1422.5" r="9.3" fill="none" stroke="#444" stroke-width="2.1"/><path d="M2841.8 1413.2 a9.3 9.3 0 0 1 0 18.6 Z" fill="#444"/><g stroke="#444" stroke-width="2.2" stroke-linecap="round"><path d="M2841.8 1403.8 V1406.6 M2841.8 1438.4 V1441.2 M2823 1422.5 H2825.8 M2857.8 1422.5 H2860.6 M2828.5 1409.2 L2830.5 1411.2 M2853.1 1433.8 L2855.1 1435.8 M2828.5 1435.8 L2830.5 1433.8 M2853.1 1411.2 L2855.1 1409.2"/></g><g fill="none" stroke="#444" stroke-width="2.1" stroke-linejoin="round"><path d="M2836.8 1513 H2830.2 a1.8 1.8 0 0 1 -1.8 -1.8 V1496.6"/><path d="M2844.7 1496.6 H2853.4 a1.8 1.8 0 0 1 1.8 1.8 V1512.6 a1.8 1.8 0 0 1 -1.8 1.8 H2849 L2845.2 1518 L2841.8 1513"/><path d="M2828.4 1497.5 H2833.3 L2836.8 1489.6 a2.2 2.2 0 0 1 3 1.5 V1496 H2845 a1.5 1.5 0 0 1 1.4 1.8 L2844.7 1506 H2828.4 Z"/></g><g fill="none" stroke="#444" stroke-width="2" stroke-linejoin="round"><path d="M31.7 1563.9 C40.6 1563.9 47.5 1569.4 47.5 1576.2 C47.5 1583 40.6 1588.4 31.7 1588.4 C28.5 1588.4 25.6 1587.8 23.1 1586.7 L18.3 1593.7 L19.8 1584.7 C17.2 1582.5 16 1579.5 16 1576.2 C16 1569.4 22.9 1563.9 31.7 1563.9 Z"/></g><circle cx="25.5" cy="1576" r="1.6" fill="#3d8c96"/><circle cx="31.7" cy="1576" r="1.6" fill="#3d8c96"/><circle cx="37.9" cy="1576" r="1.6" fill="#3d8c96"/><path d="M89.6 1584.5 H114.6 L102 1571.5 Z" fill="#444" stroke="#444" stroke-width="1.5" stroke-linejoin="round"/><circle cx="165.8" cy="1578" r="17.8" fill="#17a562"/><path d="M165.8 1569 V1587 M156.8 1578 H174.8" stroke="#fff" stroke-width="3"/><defs><filter id="tsh" x="-10%" y="-20%" width="120%" height="150%"><feGaussianBlur stdDeviation="1.2"/></filter></defs><path d="M203.5 1541.6 C211 1541.6 215.6 1546 215.6 1553 V1589 a11 11 0 0 0 11 11 H401 a11 11 0 0 0 11 -11 V1553 C412 1546 416.6 1541.6 424 1541.6 Z" fill="#000" opacity="0.13" filter="url(#tsh)" transform="translate(0,1)"/><path d="M203.5 1541.6 C211 1541.6 215.6 1546 215.6 1553 V1589 a11 11 0 0 0 11 11 H401 a11 11 0 0 0 11 -11 V1553 C412 1546 416.6 1541.6 424 1541.6 Z" fill="#fff"/><path d="M370.2 1567.3 h17.8 l-8.9 9.3 z" fill="#888"/><g fill="none" stroke="#3a3a3a" stroke-width="2" stroke-linecap="round" stroke-linejoin="round"><path d="M2226.5 1567 A6.8 6.8 0 1 0 2233.1 1577.6"/><path d="M2227.4 1581.8 C2223 1583.5 2216.6 1585.6 2216.6 1589.2 C2216.6 1592.6 2221.6 1594.2 2228 1594.2 C2234.4 1594.2 2239.4 1592.6 2239.4 1589.2 C2239.4 1585.9 2233 1583.5 2227.4 1581.8 Z"/><path d="M2237.6 1577.8 L2237.9 1574.3 C2234.4 1573.2 2232 1571 2232 1568.2 C2232 1564.6 2235.8 1561.6 2240.4 1561.6 C2245 1561.6 2248.8 1564.6 2248.8 1568.2 C2248.8 1571.8 2245 1574.6 2240.6 1574.6 Z"/></g><circle cx="2237" cy="1568" r="1.2" fill="#3a3a3a"/><circle cx="2240.5" cy="1567.9" r="1.2" fill="#3a3a3a"/><circle cx="2244.2" cy="1568" r="1.2" fill="#3a3a3a"/><rect x="2302.3" y="1567" width="29" height="22.4" rx="2.4" fill="none" stroke="#444" stroke-width="2.1"/><circle cx="2307.2" cy="1573.4" r="1.05" fill="#444"/><circle cx="2312.8" cy="1573.4" r="1.05" fill="#444"/><circle cx="2318.3" cy="1573.4" r="1.05" fill="#444"/><circle cx="2323.9" cy="1573.4" r="1.05" fill="#444"/><circle cx="2327.3" cy="1573.4" r="1.05" fill="#444"/><circle cx="2307.2" cy="1579.2" r="1.05" fill="#444"/><circle cx="2312.8" cy="1579.2" r="1.05" fill="#444"/><circle cx="2318.3" cy="1579.2" r="1.05" fill="#444"/><circle cx="2323.9" cy="1579.2" r="1.05" fill="#444"/><circle cx="2327.3" cy="1579.2" r="1.05" fill="#444"/><rect x="2311" y="1583.3" width="11.4" height="2.2" fill="#444"/><g fill="none" stroke="#3a3a3a" stroke-width="1.9"><rect x="2382.3" y="1565.5" width="25.6" height="25.4" rx="2.4"/><path d="M2389.9 1565.5 V1573 H2382.3 M2400.1 1565.5 V1573 H2407.9 M2389.9 1590.9 V1583 H2382.3 M2400.1 1590.9 V1583 H2407.9"/></g><path d="M2425.5 1575.3 h13.5 l-6.75 7.1 z" fill="#888"/><g fill="none" stroke="#3a3a3a" stroke-width="1.9"><rect x="2490.5" y="1565.5" width="25.6" height="25.4" rx="2.4"/></g><g fill="#3a3a3a"><rect x="2499.2" y="1570.2" width="7.6" height="1.8"/><rect x="2502" y="1568.2" width="1.8" height="2.5"/><rect x="2499.2" y="1584.4" width="7.6" height="1.8"/><rect x="2502" y="1585.8" width="1.8" height="2.5"/><rect x="2495.2" y="1574.3" width="1.8" height="7.4"/><rect x="2493.2" y="1577.1" width="2.5" height="1.8"/><rect x="2509.2" y="1574.3" width="1.8" height="7.4"/><rect x="2510.7" y="1577.1" width="2.5" height="1.8"/></g><rect x="2571.7" y="1576.6" width="16.4" height="3.2" fill="#555"/><path d="M2710 1574.6 L2717.0 1582.1 L2724 1574.6" fill="none" stroke="#444" stroke-width="2" stroke-linecap="round" stroke-linejoin="round"/><path d="M2767.8 1570 V1586.4 M2759.6 1578.2 H2776" stroke="#555" stroke-width="3.2"/><g fill="none" stroke="#3a3a3a" stroke-width="2" stroke-linecap="round" stroke-linejoin="round"><path d="M2829.2 1565.4 L2839.4 1575.2 M2854.6 1565.4 L2844.6 1575.2 M2829.2 1590.6 L2839.2 1580.6 M2854.6 1590.6 L2844.7 1580.6"/><path d="M2828.9 1571.2 V1565.2 H2835.2 M2848.6 1565.2 H2854.9 V1571.2 M2828.9 1584.6 V1590.8 H2835.2 M2848.6 1590.8 H2854.9 V1584.6" stroke-width="2.4"/></g></svg>
<div class="t" style="left:98.00px;top:13.10px;font-size:39.0px;line-height:43.56px;color:#1d1d1d;font-weight:bold;transform:scaleX(0.8695);">Trip Planner</div>
<div class="t" style="left:415.58px;top:21.73px;font-size:23.5px;line-height:26.25px;color:#8a8a8a;-webkit-text-stroke:0.47px #8a8a8a;transform:scaleX(0.9208);">Saved at 11:52 AM</div>
<div class="t" style="left:21.04px;top:71.00px;font-size:29.5px;line-height:32.95px;color:#1d1d1d;-webkit-text-stroke:0.59px #1d1d1d;transform:scaleX(0.9811);">File</div>
<div class="t" style="left:106.16px;top:71.00px;font-size:29.5px;line-height:32.95px;color:#1d1d1d;-webkit-text-stroke:0.59px #1d1d1d;transform:scaleX(0.9727);">Edit</div>
<div class="t" style="left:196.40px;top:71.00px;font-size:29.5px;line-height:32.95px;color:#1d1d1d;-webkit-text-stroke:0.59px #1d1d1d;transform:scaleX(0.9738);">View</div>
<div class="t" style="left:298.23px;top:71.00px;font-size:29.5px;line-height:32.95px;color:#1d1d1d;-webkit-text-stroke:0.59px #1d1d1d;transform:scaleX(0.9850);">Insert</div>
<div class="t" style="left:411.21px;top:71.00px;font-size:29.5px;line-height:32.95px;color:#1d1d1d;-webkit-text-stroke:0.59px #1d1d1d;transform:scaleX(0.9493);">Format</div>
<div class="t" style="left:540.53px;top:71.00px;font-size:29.5px;line-height:32.95px;color:#1d1d1d;-webkit-text-stroke:0.59px #1d1d1d;transform:scaleX(0.9419);">Data</div>
<div class="t" style="left:640.57px;top:71.00px;font-size:29.5px;line-height:32.95px;color:#1d1d1d;-webkit-text-stroke:0.59px #1d1d1d;transform:scaleX(0.9291);">Tools</div>
<div class="t" style="left:744.45px;top:71.00px;font-size:29.5px;line-height:32.95px;color:#1d1d1d;-webkit-text-stroke:0.59px #1d1d1d;transform:scaleX(0.9778);">Help</div>
<div class="t" style="left:2178.49px;top:21.47px;font-size:26.0px;line-height:29.04px;color:#555555;-webkit-text-stroke:0.52px #555555;transform:scaleX(0.8799);">Search in this sheet</div>
<div class="t" style="left:2588.43px;top:19.06px;font-size:27.0px;line-height:30.16px;color:#17a05b;-webkit-text-stroke:0.54px #17a05b;transform:scaleX(0.9100);">Share</div>
<div class="t" style="left:367.51px;top:128.11px;font-size:27.5px;line-height:30.72px;color:#1d1d1d;-webkit-text-stroke:0.55px #1d1d1d;transform:scaleX(0.9729);">Lato</div>
<div class="t" style="left:608.64px;top:128.11px;font-size:27.5px;line-height:30.72px;color:#1d1d1d;-webkit-text-stroke:0.55px #1d1d1d;transform:scaleX(0.9651);">10</div>
<div class="t" style="left:1685.80px;top:127.56px;font-size:28.0px;line-height:31.28px;color:#333333;-webkit-text-stroke:0.56px #333333;transform:scaleX(0.9175);">General</div>
<div class="t" style="left:60.90px;top:198.09px;font-size:23.0px;line-height:25.69px;color:#222222;-webkit-text-stroke:0.46px #222222;transform:scaleX(0.9917);">A36</div>
<div class="t" style="left:234.10px;top:464.96px;font-size:37.5px;line-height:41.89px;color:#000000;font-weight:bold;transform:scaleX(0.8807);">Trip Planner</div>
<div class="t" style="left:232.87px;top:601.90px;font-size:20.0px;line-height:22.34px;color:#111111;-webkit-text-stroke:0.4px #111111;transform:scaleX(1.0192);">Destination</div>
<div class="t" style="left:631.77px;top:601.90px;font-size:20.0px;line-height:22.34px;color:#111111;-webkit-text-stroke:0.4px #111111;transform:scaleX(0.8934);">Las Vegas</div>
<div class="t" style="left:233.61px;top:642.40px;font-size:20.0px;line-height:22.34px;color:#111111;-webkit-text-stroke:0.4px #111111;transform:scaleX(0.9930);">Start Date</div>
<div class="t" style="left:632.77px;top:642.40px;font-size:20.0px;line-height:22.34px;color:#111111;-webkit-text-stroke:0.4px #111111;transform:scaleX(1.0625);">4/20/18</div>
<div class="t" style="left:232.96px;top:683.40px;font-size:20.0px;line-height:22.34px;color:#111111;-webkit-text-stroke:0.4px #111111;transform:scaleX(0.9621);">End Date</div>
<div class="t" style="left:632.78px;top:683.40px;font-size:20.0px;line-height:22.34px;color:#111111;-webkit-text-stroke:0.4px #111111;transform:scaleX(1.0610);">4/25/18</div>
<div class="t" style="left:232.95px;top:724.40px;font-size:20.0px;line-height:22.34px;color:#111111;-webkit-text-stroke:0.4px #111111;transform:scaleX(0.9693);">No of Kids</div>
<div class="t" style="left:632.31px;top:724.40px;font-size:20.0px;line-height:22.34px;color:#111111;-webkit-text-stroke:0.4px #111111;transform:scaleX(1.1158);">5</div>
<div class="t" style="left:232.93px;top:764.90px;font-size:20.0px;line-height:22.34px;color:#111111;-webkit-text-stroke:0.4px #111111;transform:scaleX(0.9836);">No of Adults</div>
<div class="t" style="left:632.78px;top:764.90px;font-size:20.0px;line-height:22.34px;color:#111111;-webkit-text-stroke:0.4px #111111;transform:scaleX(1.0392);">4</div>
<div class="t" style="left:232.99px;top:805.90px;font-size:20.0px;line-height:22.34px;color:#1aa3d8;-webkit-text-stroke:0.4px #1aa3d8;transform:scaleX(0.9423);text-decoration:underline;">Packed Items</div>
<div class="t" style="left:632.05px;top:805.90px;font-size:20.0px;line-height:22.34px;color:#111111;-webkit-text-stroke:0.4px #111111;transform:scaleX(1.1522);">7</div>
<div class="t" style="left:233.00px;top:846.90px;font-size:20.0px;line-height:22.34px;color:#111111;-webkit-text-stroke:0.4px #111111;transform:scaleX(0.9385);">No of Bags</div>
<div class="t" style="left:632.05px;top:846.90px;font-size:20.0px;line-height:22.34px;color:#111111;-webkit-text-stroke:0.4px #111111;transform:scaleX(1.1522);">2</div>
<div class="t" style="left:232.94px;top:887.90px;font-size:20.0px;line-height:22.34px;color:#111111;-webkit-text-stroke:0.4px #111111;transform:scaleX(0.9757);">Mode of Transport</div>
<div class="t" style="left:232.92px;top:928.90px;font-size:20.0px;line-height:22.34px;color:#111111;-webkit-text-stroke:0.4px #111111;transform:scaleX(0.9903);">Hotel for stay</div>
<div class="t" style="left:233.51px;top:1116.86px;font-size:29.0px;line-height:32.39px;color:#3a3a3a;font-weight:bold;transform:scaleX(0.8797);">Expense report</div>
<div class="t" style="left:240.52px;top:1159.00px;font-size:20.0px;line-height:22.34px;color:#111111;-webkit-text-stroke:0.4px #111111;transform:scaleX(0.9857);">Estimate</div>
<div class="t" style="left:640.70px;top:1159.00px;font-size:20.0px;line-height:22.34px;color:#111111;-webkit-text-stroke:0.4px #111111;transform:scaleX(0.9756);">$4,000.00</div>
<div class="t" style="left:359.81px;top:1204.80px;font-size:20.0px;line-height:22.34px;color:#111111;-webkit-text-stroke:0.4px #111111;transform:scaleX(0.9328);">Head of expense</div>
<div class="t" style="left:776.50px;top:1204.80px;font-size:20.0px;line-height:22.34px;color:#111111;-webkit-text-stroke:0.4px #111111;transform:scaleX(0.9652);">Amount in $</div>
<div class="t" style="left:234.00px;top:1246.20px;font-size:20.0px;line-height:22.34px;color:#111111;-webkit-text-stroke:0.4px #111111;transform:scaleX(0.9915);">Ticket</div>
<div class="t" style="left:952.70px;top:1246.20px;font-size:20.0px;line-height:22.34px;color:#111111;-webkit-text-stroke:0.4px #111111;transform:scaleX(0.9878);">$350.00</div>
<div class="t" style="left:232.83px;top:1287.30px;font-size:20.0px;line-height:22.34px;color:#111111;-webkit-text-stroke:0.4px #111111;transform:scaleX(0.9798);">Food</div>
<div class="t" style="left:937.51px;top:1287.30px;font-size:20.0px;line-height:22.34px;color:#111111;-webkit-text-stroke:0.4px #111111;transform:scaleX(0.9733);">$1,203.00</div>
<div class="t" style="left:234.00px;top:1327.90px;font-size:20.0px;line-height:22.34px;color:#111111;-webkit-text-stroke:0.4px #111111;transform:scaleX(0.9938);">Transportation</div>
<div class="t" style="left:952.70px;top:1327.90px;font-size:20.0px;line-height:22.34px;color:#111111;-webkit-text-stroke:0.4px #111111;transform:scaleX(0.9878);">$543.00</div>
<div class="t" style="left:232.85px;top:1368.90px;font-size:20.0px;line-height:22.34px;color:#111111;-webkit-text-stroke:0.4px #111111;transform:scaleX(0.9692);">Miscellaneous</div>
<div class="t" style="left:952.70px;top:1368.90px;font-size:20.0px;line-height:22.34px;color:#111111;-webkit-text-stroke:0.4px #111111;transform:scaleX(0.9878);">$954.00</div>
<div class="t" style="left:234.22px;top:1408.35px;font-size:20.5px;line-height:22.90px;color:#111111;font-weight:bold;transform:scaleX(0.9072);">Total expenditure</div>
<div class="t" style="left:936.81px;top:1408.35px;font-size:20.5px;line-height:22.90px;color:#111111;font-weight:bold;transform:scaleX(0.9579);">$3,050.00</div>
<div class="t" style="left:814.22px;top:1087.20px;font-size:39.0px;line-height:43.56px;color:#a9a9a9;font-weight:bold;transform:scaleX(0.9483);">3050</div>
<div class="t" style="left:241.48px;top:1555.92px;font-size:25.5px;line-height:28.48px;color:#1d1d1d;font-weight:bold;transform:scaleX(0.8936);">Dashboard</div>
<div class="t" style="left:443.40px;top:1555.92px;font-size:25.5px;line-height:28.48px;color:#333333;-webkit-text-stroke:0.51px #333333;">Itinerary</div>
<div class="t" style="left:599.35px;top:1555.92px;font-size:25.5px;line-height:28.48px;color:#333333;-webkit-text-stroke:0.51px #333333;transform:scaleX(0.9039);">Things to pack</div>
<div class="t" style="left:813.44px;top:1555.92px;font-size:25.5px;line-height:28.48px;color:#333333;-webkit-text-stroke:0.51px #333333;transform:scaleX(0.9277);">Expense report</div>
<div class="t" style="left:1037.05px;top:1555.92px;font-size:25.5px;line-height:28.48px;color:#333333;-webkit-text-stroke:0.51px #333333;transform:scaleX(0.9800);">Instructions</div>
<div class="t" style="left:2633.88px;top:1563.47px;font-size:26.0px;line-height:29.04px;color:#222222;-webkit-text-stroke:0.52px #222222;transform:scaleX(0.9192);">73%</div>
</body></html>
